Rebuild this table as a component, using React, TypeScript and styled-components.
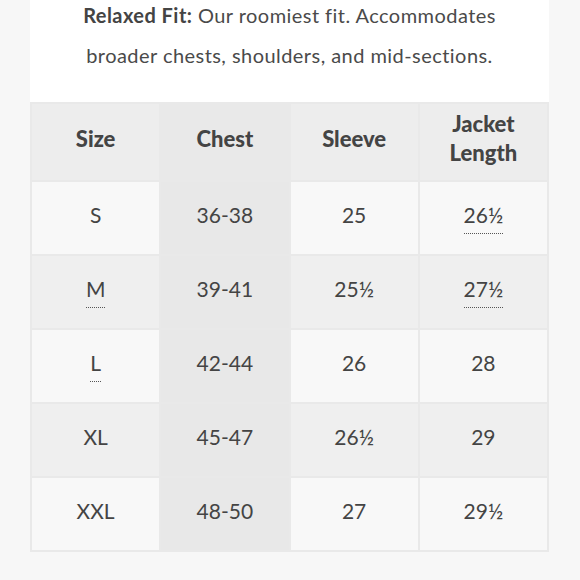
import React from "react"
import styled, { createGlobalStyle } from "styled-components"

const Global = createGlobalStyle`
html, body {
  margin: 0;
  padding: 0;
  background: #f7f7f7;
}
body {
  font-family: Lato, "Open Sans", "Liberation Sans", sans-serif;
  color: #444;
}
`

const Page = styled.div`
width: 519px;
margin-left: 30px;
overflow: hidden;
height: 580px;
`

const Intro = styled.div`
background: #fff;
padding: 0 0 27px;
text-align: center;
`

const IntroText = styled.p`
margin: -5px -20px 0;
font-size: 20px;
line-height: 40px;
color: #4a4a4a;
letter-spacing: 0.45px;
b {
  font-weight: 700;
  color: #444;
}
`

const Table = styled.table`
width: 519px;
border-collapse: collapse;
table-layout: fixed;
border: 2px solid #e9e9e9;
`

const HeadCell = styled.th<{ $chest?: boolean }>`
height: 68px;
padding: 0 0 8px;
font-size: 22px;
font-weight: 900;
line-height: 29px;
color: #444;
background: ${p => (p.$chest ? "#e9e9e9" : "#ededed")};
border: 2px solid #e9e9e9;
`

const Cell = styled.td<{ $chest?: boolean; $alt?: boolean }>`
height: 64px;
padding: 0 0 8px;
text-align: center;
font-size: 21px;
color: #444;
background: ${p => (p.$chest ? "#e8e8e8" : p.$alt ? "#efefef" : "#f8f8f8")};
border: 2px solid #e9e9e9;
`

const Dotted = styled.span`
display: inline-block;
line-height: 22px;
padding: 2px 0 7px;
margin-bottom: -9px;
border-bottom: 1px dotted #555;
`

type Val = { text: string; dotted?: boolean }

const rows: Val[][] = [
  [{ text: "S" }, { text: "36-38" }, { text: "25" }, { text: "26½", dotted: true }],
  [{ text: "M", dotted: true }, { text: "39-41" }, { text: "25½" }, { text: "27½", dotted: true }],
  [{ text: "L", dotted: true }, { text: "42-44" }, { text: "26" }, { text: "28" }],
  [{ text: "XL" }, { text: "45-47" }, { text: "26½" }, { text: "29" }],
  [{ text: "XXL" }, { text: "48-50" }, { text: "27" }, { text: "29½" }],
]

export default function App() {
  return (
    <Page>
      <Global />
      <Intro>
        <IntroText>
          <b>Relaxed Fit:</b> Our roomiest fit. Accommodates
          <br />
          broader chests, shoulders, and mid-sections.
        </IntroText>
      </Intro>
      <Table>
        <thead>
          <tr>
            <HeadCell>Size</HeadCell>
            <HeadCell $chest>Chest</HeadCell>
            <HeadCell>Sleeve</HeadCell>
            <HeadCell>
              Jacket
              <br />
              Length
            </HeadCell>
          </tr>
        </thead>
        <tbody>
          {rows.map((row, i) => (
            <tr key={i}>
              {row.map((v, j) => (
                <Cell key={j} $chest={j === 1} $alt={i % 2 === 1}>
                  {v.dotted ? <Dotted>{v.text}</Dotted> : v.text}
                </Cell>
              ))}
            </tr>
          ))}
        </tbody>
      </Table>
    </Page>
  )
}
